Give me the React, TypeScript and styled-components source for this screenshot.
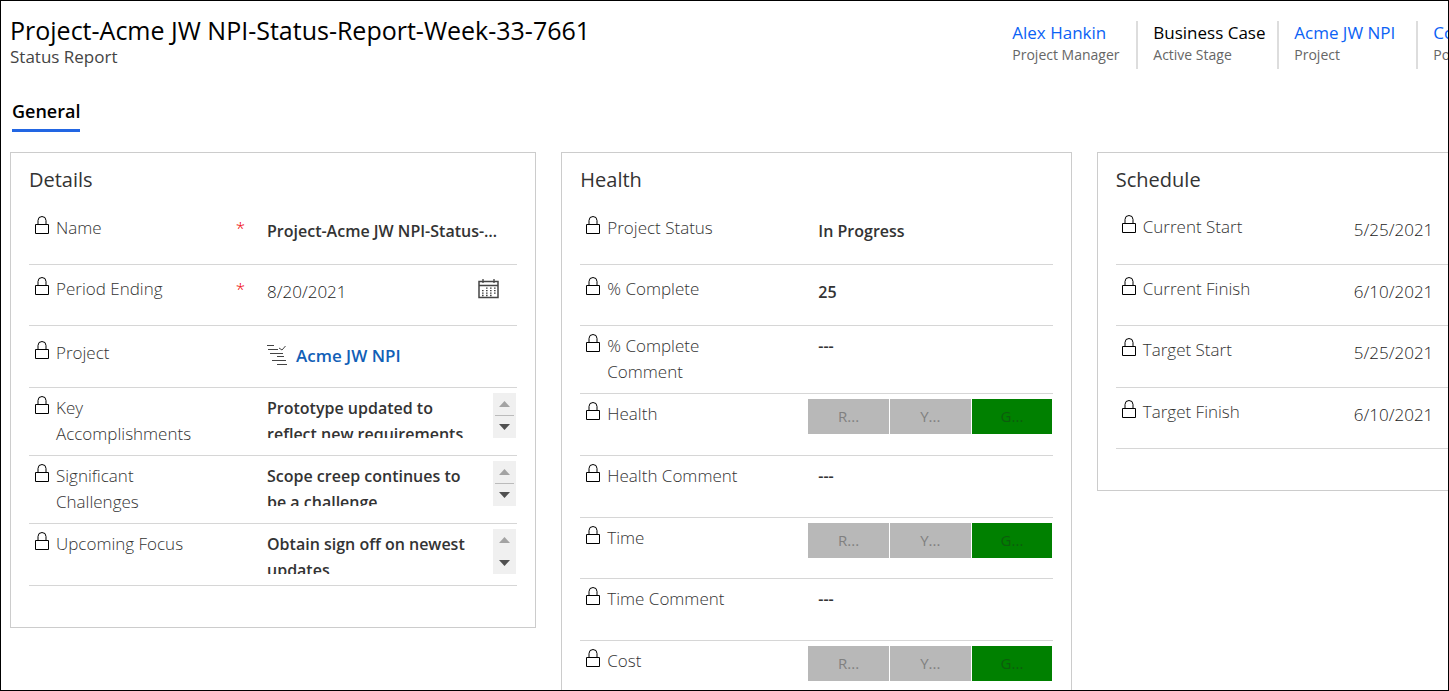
import React from "react";
import styled, { createGlobalStyle } from "styled-components";

const GlobalStyle = createGlobalStyle`
  *, *::before, *::after { box-sizing: border-box; }
  body {
    margin: 0;
    background: #fff;
    color: #333;
    font-family: "Open Sans", "Noto Sans", sans-serif;
  }
`;

const Page = styled.main`
  height: 100vh;
  overflow: hidden;
  border: 1px solid #000;
  padding-left: 9px;
`;

const Header = styled.header`
  display: grid;
  grid-template-columns: 69.7% auto;
  padding-top: 14px;
`;

const Title = styled.h1`
  margin: 0;
  font-size: 25px;
  line-height: 30px;
  font-weight: 500;
  color: #000;
  white-space: nowrap;
`;

const Subtitle = styled.p`
  margin: 0;
  font-size: 17px;
  line-height: 24px;
  font-weight: 400;
  color: #444;
`;

const Facts = styled.div`
  display: grid;
  grid-template-columns: 141px 141px 139px 160px;
  padding-top: 6px;
`;

const Fact = styled.div`
  height: 48px;
  & + & {
    border-left: 2px solid #ddd;
    margin-left: -17px;
    padding-left: 15px;
  }
`;

const FactValue = styled.div`
  font-size: 17px;
  line-height: 24px;
  font-weight: 500;
  color: #000;
  white-space: nowrap;
`;

const FactLink = styled.a`
  color: #0b62f5;
  text-decoration: none;
`;

const FactName = styled.div`
  font-size: 14px;
  line-height: 20px;
  color: #666;
  white-space: nowrap;
`;

const Tabs = styled.nav`
  display: flex;
  padding: 27px 2px 0;
`;

const Tab = styled.button`
  padding: 0 0 2px;
  border: 0;
  border-bottom: 3px solid #2266e3;
  background: none;
  color: #000;
  font: 600 18px/31px "Open Sans", "Noto Sans", sans-serif;
`;

const Board = styled.div`
  display: grid;
  grid-template-columns: 36.6% 35.5% 35.5%;
  gap: 25px;
  align-items: start;
  padding-top: 20px;
`;

const Card = styled.section`
  border: 1px solid #ccc;
  padding: 14px 18px 41px;
`;

const CardTitle = styled.h2`
  margin: 0 0 10px;
  font-size: 20px;
  line-height: 26px;
  font-weight: 400;
  color: #333;
`;

const Row = styled.div<{ $height: number; $pad: number }>`
  display: grid;
  grid-template-columns: 238px minmax(0, 1fr);
  height: ${(p) => p.$height}px;
  padding-top: ${(p) => p.$pad}px;
  border-bottom: 1px solid #d6d6d6;
`;

const Label = styled.label`
  display: flex;
  padding: 0 22px 0 6px;
  font-size: 17px;
  line-height: 26px;
  font-weight: 350;
  color: #333;
`;

const LabelText = styled.span`
  flex: 0 1 150px;
`;

const Required = styled.span`
  margin-left: auto;
  color: #e00;
`;

const LockSvg = styled.svg`
  flex: none;
  width: 14px;
  height: 19px;
  margin: 1px 7px 0 0;
`;

const Value = styled.div<{ $drop?: number }>`
  display: flex;
  align-items: flex-start;
  padding-top: ${(p) => p.$drop ?? 0}px;
`;

const TextInput = styled.input<{ $light?: boolean }>`
  width: 240px;
  min-width: 0;
  height: 26px;
  padding: 0;
  border: 0;
  outline: 0;
  background: none;
  color: ${(p) => (p.$light ? "#222" : "#333")};
  text-overflow: ellipsis;
  font-family: inherit;
  font-size: ${(p) => (p.$light ? 17 : 16)}px;
  line-height: 26px;
  font-weight: ${(p) => (p.$light ? 350 : 600)};
`;

const RecordLink = styled.a`
  display: flex;
  gap: 8px;
  color: #1160b7;
  font-size: 17px;
  line-height: 26px;
  font-weight: 600;
  text-decoration: none;
`;

const IconButton = styled.button`
  margin: 0 18px 0 auto;
  padding: 0;
  border: 0;
  background: none;
  line-height: 0;
`;

const Memo = styled.textarea`
  width: 206px;
  height: 43px;
  padding: 0;
  border: 0;
  outline: 0;
  resize: none;
  overflow: hidden;
  background: none;
  color: #333;
  font-family: inherit;
  font-size: 16px;
  line-height: 26px;
  font-weight: 600;
`;

const Scroller = styled.div`
  display: flex;
  flex-direction: column;
  align-items: center;
  width: 23px;
  height: 45px;
  margin: -2px 1px 0 auto;
  background: #f0f0f0;
`;

const ScrollButton = styled.button<{ $line?: boolean }>`
  flex: 1;
  width: 19px;
  padding: 0;
  border: 0;
  border-bottom: ${(p) => (p.$line ? "1px solid #bbb" : "0")};
  background: none;
  line-height: 0;
`;

const Ratings = styled.div`
  display: flex;
  flex: none;
  gap: 1px;
  width: 244px;
  margin: -2px 1px 0 -10px;
`;

const Rating = styled.button<{ $on?: boolean }>`
  flex: 1;
  height: 35px;
  padding: 0;
  border: 0;
  background: ${(p) => (p.$on ? "#008000" : "#b8b8b8")};
  color: ${(p) => (p.$on ? "#0d5c0d" : "#808080")};
  font: 400 15px/35px "Open Sans", "Noto Sans", sans-serif;
`;

const Lock = () => (
  <LockSvg viewBox="0 0 14 19" fill="none" stroke="#000" aria-hidden="true">
    <path d="M.5 8.5h13v9H.5z" />
    <path d="M3 8.5V4.500a4 4 0 0 1 8 0v4" />
  </LockSvg>
);

const Calendar = () => (
  <svg width="21" height="20" viewBox="0 0 21 20" fill="none" stroke="#444">
    <path d="M1 2.500h19v16H1z" strokeWidth="1.500" />
    <path d="M1 6.500h19M5 0v4M16 0v4" strokeWidth="1.300" />
    <path
      d="M8 9.200h10M4 11.700h14M4 14.200h14M4 16.500h10"
      strokeWidth="1.300"
      strokeDasharray="1.600 2.400"
    />
  </svg>
);

const Gantt = () => (
  <svg width="21" height="26" viewBox="0 0 21 26" fill="none" stroke="#444" aria-hidden="true">
    <path d="M0 2.500h7M1 6.500h10M3 10.500h13M10 13.500h7M5 17.500h14M10 21.500h10M12 5l3 2 3.500-4" />
  </svg>
);

type Kind = "text" | "light" | "date" | "link" | "memo" | "rating";

interface Field {
  label: string;
  value?: string;
  kind: Kind;
  height: number;
  pad: number;
  required?: boolean;
  line?: boolean;
}

const details: Field[] = [
  { label: "Name", value: "Project-Acme JW NPI-Status-Report-Week-33-7661", kind: "text", height: 62, pad: 12, required: true },
  { label: "Period Ending", value: "8/20/2021", kind: "date", height: 61, pad: 11, required: true },
  { label: "Project", value: "Acme JW NPI", kind: "link", height: 62, pad: 14 },
  { label: "Key Accomplishments", value: "Prototype updated to reflect new requirements", kind: "memo", height: 68, pad: 7, line: true },
  { label: "Significant Challenges", value: "Scope creep continues to be a challenge", kind: "memo", height: 68, pad: 7, line: true },
  { label: "Upcoming Focus", value: "Obtain sign off on newest updates", kind: "memo", height: 62, pad: 7 },
];

const health: Field[] = [
  { label: "Project Status", value: "In Progress", kind: "text", height: 62, pad: 12 },
  { label: "% Complete", value: "25", kind: "text", height: 61, pad: 11 },
  { label: "% Complete Comment", value: "---", kind: "text", height: 68, pad: 7 },
  { label: "Health", kind: "rating", height: 62, pad: 7 },
  { label: "Health Comment", value: "---", kind: "text", height: 62, pad: 7 },
  { label: "Time", kind: "rating", height: 61, pad: 7 },
  { label: "Time Comment", value: "---", kind: "text", height: 62, pad: 7 },
  { label: "Cost", kind: "rating", height: 62, pad: 7 },
];

const schedule: Field[] = [
  { label: "Current Start", value: "5/25/2021", kind: "light", height: 62, pad: 11 },
  { label: "Current Finish", value: "6/10/2021", kind: "light", height: 61, pad: 11 },
  { label: "Target Start", value: "5/25/2021", kind: "light", height: 62, pad: 11 },
  { label: "Target Finish", value: "6/10/2021", kind: "light", height: 61, pad: 11 },
];

function FieldValue({ field, id }: { field: Field; id: string }) {
  const drop = field.pad > 7 ? 3 : 0;
  switch (field.kind) {
    case "link":
      return (
        <Value $drop={drop}>
          <RecordLink href="#project" id={id}>
            <Gantt />
            {field.value}
          </RecordLink>
        </Value>
      );
    case "memo":
      return (
        <Value>
          <Memo id={id} readOnly defaultValue={field.value} />
          <Scroller>
            <ScrollButton $line={field.line} aria-label="Scroll up">
              <svg width="11" height="6"><path d="M0 6h11L5.500 0z" fill="#a3a3a3" /></svg>
            </ScrollButton>
            <ScrollButton aria-label="Scroll down">
              <svg width="11" height="6"><path d="M0 0h11L5.500 6z" fill="#505050" /></svg>
            </ScrollButton>
          </Scroller>
        </Value>
      );
    case "rating":
      return (
        <Value>
          <Ratings id={id} role="group" aria-label={field.label}>
            <Rating disabled>R...</Rating>
            <Rating disabled>Y...</Rating>
            <Rating disabled $on>G...</Rating>
          </Ratings>
        </Value>
      );
    case "date":
      return (
        <Value $drop={drop}>
          <TextInput id={id} readOnly $light defaultValue={field.value} />
          <IconButton aria-label="Pick a date">
            <Calendar />
          </IconButton>
        </Value>
      );
    default:
      return (
        <Value $drop={drop}>
          <TextInput id={id} readOnly $light={field.kind === "light"} defaultValue={field.value} />
        </Value>
      );
  }
}

function FieldCard({ title, fields }: { title: string; fields: Field[] }) {
  return (
    <Card>
      <CardTitle>{title}</CardTitle>
      {fields.map((field) => {
        const id = field.label.toLowerCase().replace(/\W+/g, "-");
        return (
          <Row key={id} $height={field.height} $pad={field.pad}>
            <Label htmlFor={id}>
              <Lock />
              <LabelText>{field.label}</LabelText>
              {field.required && <Required>*</Required>}
            </Label>
            <FieldValue field={field} id={id} />
          </Row>
        );
      })}
    </Card>
  );
}

export default function App() {
  return (
    <>
      <GlobalStyle />
      <Page>
        <Header>
          <div>
            <Title>Project-Acme JW NPI-Status-Report-Week-33-7661</Title>
            <Subtitle>Status Report</Subtitle>
          </div>
          <Facts>
            <Fact>
              <FactValue><FactLink href="#manager">Alex Hankin</FactLink></FactValue>
              <FactName>Project Manager</FactName>
            </Fact>
            <Fact>
              <FactValue>Business Case</FactValue>
              <FactName>Active Stage</FactName>
            </Fact>
            <Fact>
              <FactValue><FactLink href="#project">Acme JW NPI</FactLink></FactValue>
              <FactName>Project</FactName>
            </Fact>
            <Fact>
              <FactValue><FactLink href="#portfolio">Contoso</FactLink></FactValue>
              <FactName>Portfolio</FactName>
            </Fact>
          </Facts>
        </Header>
        <Tabs>
          <Tab>General</Tab>
        </Tabs>
        <Board>
          <FieldCard title="Details" fields={details} />
          <FieldCard title="Health" fields={health} />
          <FieldCard title="Schedule" fields={schedule} />
        </Board>
      </Page>
    </>
  );
}
